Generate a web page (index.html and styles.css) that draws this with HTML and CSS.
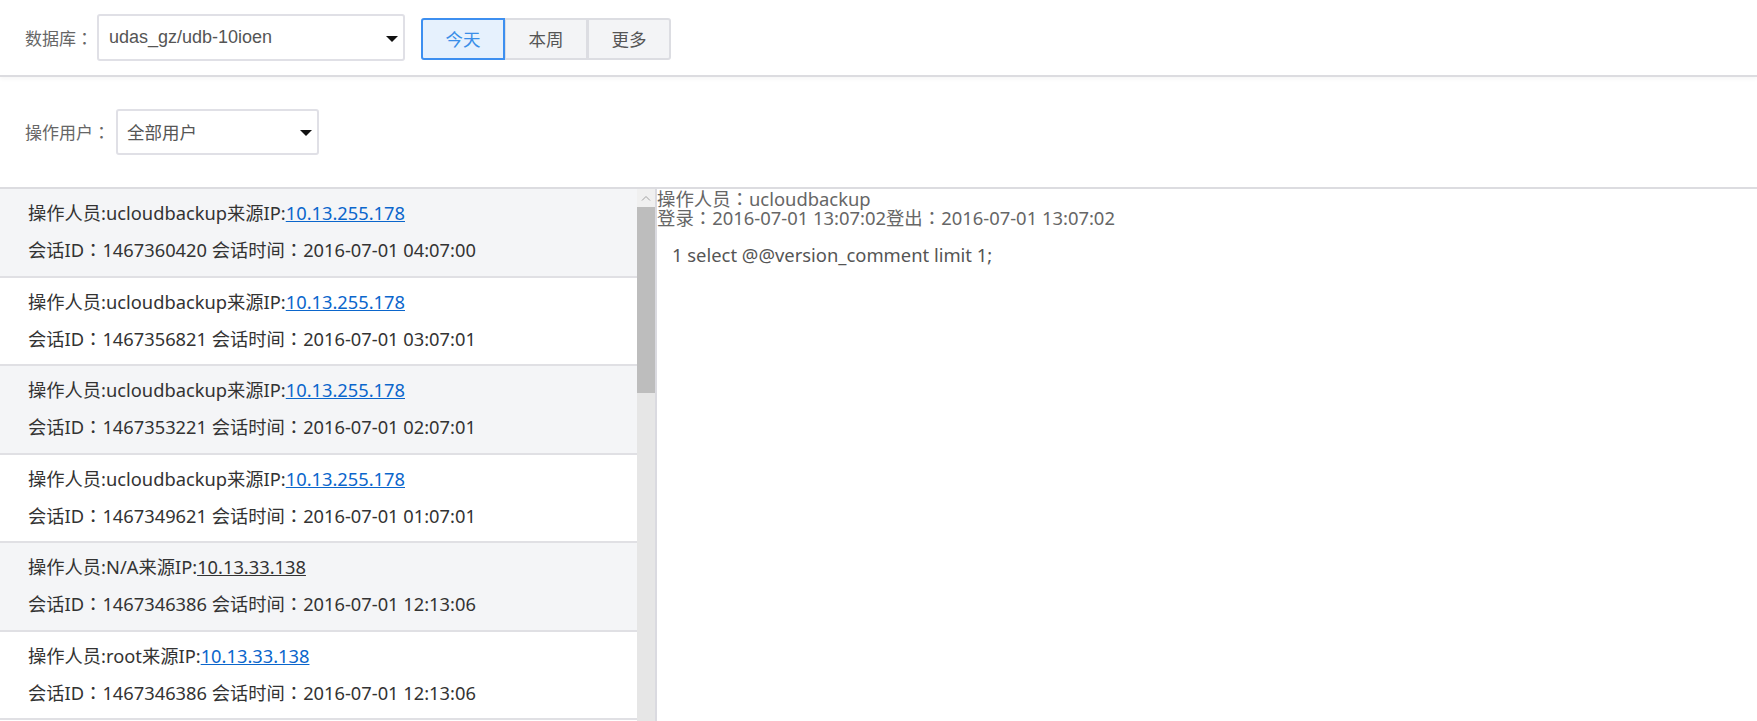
FILE: index.html
```html
<!DOCTYPE html>
<html lang="zh-CN">
<head>
<meta charset="utf-8">
<title>会话审计</title>
<link rel="stylesheet" href="styles.css">
</head>
<body>
<div class="toolbar">
  <span class="label">数据库<span class="c" lang="zh-TW">：</span></span>
  <div class="select select-db">
    <span class="select-text">udas_gz/udb-10ioen</span>
    <span class="caret"></span>
  </div>
  <div class="btn-group">
    <button class="btn active">今天</button>
    <button class="btn">本周</button>
    <button class="btn">更多</button>
  </div>
</div>
<div class="filter">
  <span class="label">操作用户<span class="c" lang="zh-TW">：</span></span>
  <div class="select select-user">
    <span class="select-text cjk">全部用户</span>
    <span class="caret"></span>
  </div>
</div>
<div class="main">
  <div class="list">
    <div class="item odd">
      <div class="line">操作人员:ucloudbackup来源IP:<a class="ip" href="#">10.13.255.178</a></div>
      <div class="line">会话ID<span class="c" lang="zh-TW">：</span>1467360420 会话时间<span class="c" lang="zh-TW">：</span>2016-07-01 04:07:00</div>
    </div>
    <div class="item">
      <div class="line">操作人员:ucloudbackup来源IP:<a class="ip" href="#">10.13.255.178</a></div>
      <div class="line">会话ID<span class="c" lang="zh-TW">：</span>1467356821 会话时间<span class="c" lang="zh-TW">：</span>2016-07-01 03:07:01</div>
    </div>
    <div class="item odd">
      <div class="line">操作人员:ucloudbackup来源IP:<a class="ip" href="#">10.13.255.178</a></div>
      <div class="line">会话ID<span class="c" lang="zh-TW">：</span>1467353221 会话时间<span class="c" lang="zh-TW">：</span>2016-07-01 02:07:01</div>
    </div>
    <div class="item">
      <div class="line">操作人员:ucloudbackup来源IP:<a class="ip" href="#">10.13.255.178</a></div>
      <div class="line">会话ID<span class="c" lang="zh-TW">：</span>1467349621 会话时间<span class="c" lang="zh-TW">：</span>2016-07-01 01:07:01</div>
    </div>
    <div class="item odd">
      <div class="line">操作人员:N/A来源IP:<a class="ip dark" href="#">10.13.33.138</a></div>
      <div class="line">会话ID<span class="c" lang="zh-TW">：</span>1467346386 会话时间<span class="c" lang="zh-TW">：</span>2016-07-01 12:13:06</div>
    </div>
    <div class="item">
      <div class="line">操作人员:root来源IP:<a class="ip" href="#">10.13.33.138</a></div>
      <div class="line">会话ID<span class="c" lang="zh-TW">：</span>1467346386 会话时间<span class="c" lang="zh-TW">：</span>2016-07-01 12:13:06</div>
    </div>
  </div>
  <div class="scrollbar">
    <div class="scroll-up">
      <svg width="10" height="6" viewBox="0 0 10 6"><path d="M1 5.5 L5 1.5 L9 5.5" fill="none" stroke="#a0a0a0" stroke-width="1"/></svg>
    </div>
    <div class="thumb"></div>
  </div>
  <div class="detail">
    <div class="meta">操作人员<span class="c" lang="zh-TW">：</span>ucloudbackup</div>
    <div class="meta">登录<span class="c" lang="zh-TW">：</span>2016-07-01 13:07:02登出<span class="c" lang="zh-TW">：</span>2016-07-01 13:07:02</div>
    <div class="sql">1 select @@version_comment limit 1;</div>
  </div>
</div>
</body>
</html>
```
FILE: styles.css
```css
html, body {
  margin: 0;
  padding: 0;
  height: 100%;
  overflow: hidden;
  background: #fff;
}
body {
  font-family: "Noto Sans", "Noto Sans CJK SC", sans-serif;
  color: #333;
}
.c {
  font-family: "Noto Sans CJK TC", "Noto Sans CJK SC", sans-serif;
}
.toolbar {
  height: 77px;
  box-sizing: border-box;
  display: flex;
  align-items: center;
  padding-left: 25px;
  border-bottom: 2px solid #dcdce0;
  box-shadow: 0 2px 4px rgba(0, 0, 0, 0.04);
  position: relative;
  z-index: 1;
}
.label {
  font-family: "Noto Sans CJK SC", sans-serif;
  font-size: 17px;
  color: #666;
  white-space: nowrap;
}
.select {
  box-sizing: border-box;
  border: 2px solid #e0e0e6;
  border-radius: 3px;
  background: #fff;
  display: flex;
  align-items: center;
  justify-content: space-between;
  color: #555;
}
.select-db {
  width: 308px;
  height: 47px;
  padding: 0 5px 0 10px;
  margin-left: 4px;
}
.select-user {
  width: 203px;
  height: 46px;
  padding: 0 5px 0 9px;
  margin-left: 6px;
}
.select-text {
  font-family: "Liberation Sans", Arial, "Noto Sans CJK SC", sans-serif;
  font-size: 18px;
  color: #555;
}
.select-text.cjk {
  font-family: "Noto Sans CJK SC", sans-serif;
  font-size: 17.5px;
}
.caret {
  width: 0;
  height: 0;
  border-left: 6px solid transparent;
  border-right: 6px solid transparent;
  border-top: 6px solid #111;
  margin-top: 2px;
}
.btn-group {
  display: flex;
  margin-left: 16px;
  margin-top: 2px;
}
.btn {
  box-sizing: border-box;
  width: 84px;
  height: 42px;
  border: 2px solid #dcdde2;
  background: #f3f4f6;
  color: #555;
  font-family: "Noto Sans CJK SC", sans-serif;
  font-size: 17.5px;
  padding: 0;
  margin: 0;
  margin-left: -1px;
}
.btn:first-child {
  margin-left: 0;
  border-radius: 3px 0 0 3px;
}
.btn:last-child {
  border-radius: 0 3px 3px 0;
}
.btn.active {
  border-color: #3d8ff0;
  background: #e6f1fd;
  color: #3a8ee8;
  position: relative;
  z-index: 1;
}
.filter {
  height: 110px;
  box-sizing: border-box;
  display: flex;
  align-items: center;
  padding-left: 25px;
  padding-bottom: 1px;
}
.main {
  display: flex;
  border-top: 2px solid #dcdce0;
  height: 532px;
}
.list {
  width: 637px;
  flex: none;
}
.item {
  box-sizing: border-box;
  height: 88.5px;
  padding: 6px 0 0 28px;
  border-bottom: 2px solid #e0e0e4;
  background: #fff;
}
.item.odd {
  background: #f4f5f7;
}
.line {
  font-size: 18.3px;
  line-height: 36px;
  color: #333;
  white-space: nowrap;
}
.ip {
  color: #0b66cc;
  text-decoration: underline;
}
.ip.dark {
  color: #333;
}
.scrollbar {
  width: 18px;
  flex: none;
  background: #e6e6e6;
  border-right: 2px solid #dadae0;
  display: flex;
  flex-direction: column;
}
.scroll-up {
  height: 18px;
  background: #f0f0f0;
  display: flex;
  align-items: center;
  justify-content: center;
}
.thumb {
  height: 186px;
  background: #bdbdbd;
}
.detail {
  flex: 1;
  color: #666;
}
.meta {
  font-size: 18.4px;
  line-height: 18px;
  white-space: nowrap;
}
.sql {
  font-size: 18.4px;
  line-height: 18px;
  margin-top: 19px;
  padding-left: 15px;
  color: #555;
}
```
